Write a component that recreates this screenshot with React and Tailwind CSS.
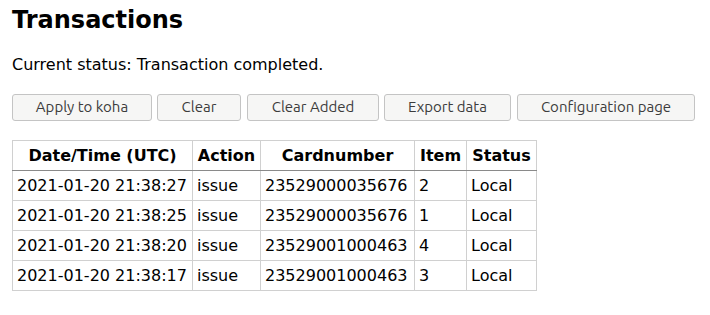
export default function App() {
  const rows = [
    ["2021-01-20 21:38:27", "issue", "23529000035676", "2", "Local"],
    ["2021-01-20 21:38:25", "issue", "23529000035676", "1", "Local"],
    ["2021-01-20 21:38:20", "issue", "23529001000463", "4", "Local"],
    ["2021-01-20 21:38:17", "issue", "23529001000463", "3", "Local"],
  ];
  const widths = ["w-[180px]", "w-[68px]", "w-[154px]", "w-[52px]", "w-[70px]"];
  const btn =
    "h-[27px] rounded-[3px] border border-[#c4c4c4] bg-[#f6f6f5] text-[15px] text-[#3c3c3c] font-['Ubuntu','Noto_Sans',sans-serif]";
  return (
    <div className="px-3 pt-[5px] font-['DejaVu_Sans',sans-serif] text-black bg-white min-h-[315px]">
      <h1 className="text-[24px] font-bold leading-[30px]">Transactions</h1>
      <p className="mt-[20px] text-[16px] leading-[20px]">Current status: Transaction completed.</p>
      <div className="mt-[19px] flex">
        <button className={`${btn} w-[140px]`}>Apply to koha</button>
        <button className={`${btn} w-[84px] ml-[5px]`}>Clear</button>
        <button className={`${btn} w-[132px] ml-[6px]`}>Clear Added</button>
        <button className={`${btn} w-[127px] ml-[5px]`}>Export data</button>
        <button className={`${btn} w-[178px] ml-[6px]`}>Configuration page</button>
      </div>
      <table className="mt-[19px] border-collapse text-[16px] table-fixed w-[525px]">
        <thead>
          <tr className="h-[30px]">
            {["Date/Time (UTC)", "Action", "Cardnumber", "Item", "Status"].map((h, j) => (
              <th key={h} className={`border border-[#d0d0d0] border-b-[#8a8a8a] px-[4px] font-bold text-center whitespace-nowrap ${widths[j]}`}>{h}</th>
            ))}
          </tr>
        </thead>
        <tbody>
          {rows.map((r, i) => (
            <tr key={i} className="h-[30px]">
              {r.map((c, j) => (
                <td key={j} className="border border-[#d0d0d0] px-[4px] whitespace-nowrap">{c}</td>
              ))}
            </tr>
          ))}
        </tbody>
      </table>
    </div>
  );
}
